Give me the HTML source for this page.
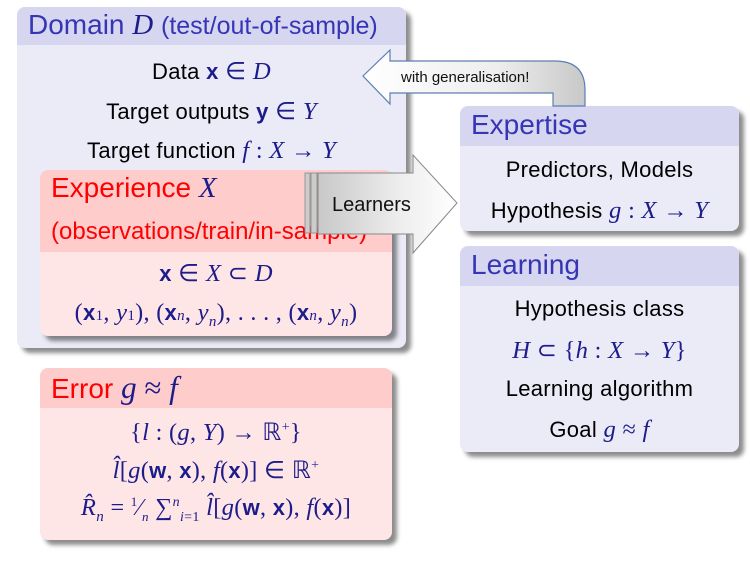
<!DOCTYPE html>
<html><head><meta charset="utf-8"><style>
body{margin:0;width:750px;height:564px;background:#fff;position:relative;overflow:hidden;font-family:"Liberation Sans","DejaVu Sans",sans-serif;}
.box{position:absolute;border-radius:8px;overflow:hidden;box-shadow:5px 5px 4px rgba(0,0,0,0.45);}
.hd{position:absolute;left:0;right:0;top:0;}
.l{position:absolute;left:0;right:0;text-align:center;font-size:22px;color:#000;white-space:nowrap;letter-spacing:0.3px;}
.m{color:#1c1c8a;font-family:"Liberation Serif",serif;font-style:italic;font-size:1.12em;}
.mr{color:#1c1c8a;font-family:"Liberation Serif",serif;font-size:1.1em;}
.b{color:#1c1c8a;font-weight:bold;font-family:"Liberation Sans",sans-serif;}
.t{position:absolute;left:11px;font-size:28px;color:#3535b5;white-space:nowrap;}
.tr{color:#ff0000;}
</style></head><body>

<div class="box" style="left:17px;top:7px;width:389px;height:341px;background:#ebebf7;">
 <div class="hd" style="height:38px;background:#d6d6f0;"></div>
 <div class="t" style="top:2px;">Domain <span class="m" style="font-size:29px">D</span> <span style="font-size:25px">(test/out-of-sample)</span></div>
 <div class="l" style="top:50px;">Data <span class="b">x</span> <span class="mr">∈</span> <span class="m">D</span></div>
 <div class="l" style="top:90px;">Target outputs <span class="b">y</span> <span class="mr">∈</span> <span class="m">Y</span></div>
 <div class="l" style="top:130px;">Target function <span class="m">f</span> <span class="mr">:</span> <span class="m">X</span> <span class="mr">→</span> <span class="m">Y</span></div>
</div>

<div class="box" style="left:40px;top:170px;width:352px;height:166px;background:#ffe6e6;">
 <div class="hd" style="height:82px;background:#ffcccc;"></div>
 <div class="t tr" style="top:2px;">Experience <span class="m" style="font-size:29px">X</span></div>
 <div class="t tr" style="top:48px;font-size:24px;">(observations/train/in-sample)</div>
 <div class="l" style="top:89px;"><span class="b">x</span> <span class="mr">∈</span> <span class="m">X</span> <span class="mr">⊂</span> <span class="m">D</span></div>
 <div class="l" style="top:129px;"><span class="mr">(</span><span class="b">x</span><span class="mr" style="font-size:15px">1</span><span class="mr">, </span><span class="m">y</span><span class="mr" style="font-size:15px">1</span><span class="mr">), (</span><span class="b">x</span><span class="m" style="font-size:15px">n</span><span class="mr">, </span><span class="m">y<sub style="font-size:15px">n</sub></span><span class="mr">), . . . , (</span><span class="b">x</span><span class="m" style="font-size:15px">n</span><span class="mr">, </span><span class="m">y<sub style="font-size:15px">n</sub></span><span class="mr">)</span></div>
</div>

<div class="box" style="left:40px;top:368px;width:352px;height:172px;background:#ffe6e6;">
 <div class="hd" style="height:40px;background:#ffcccc;"></div>
 <div class="t tr" style="top:2px;">Error <span class="m">g</span> <span class="mr">≈</span> <span class="m">f</span></div>
 <div class="l" style="top:50px;font-size:22px;"><span class="mr">{</span><span class="m">l</span> <span class="mr">: (</span><span class="m">g</span><span class="mr">, </span><span class="m">Y</span><span class="mr">) → ℝ<sup style="font-size:14px">+</sup>}</span></div>
 <div class="l" style="top:88px;font-size:22px;"><span class="m">l̂</span><span class="mr">[</span><span class="m">g</span><span class="mr">(</span><span class="b">w</span><span class="mr">, </span><span class="b">x</span><span class="mr">), </span><span class="m">f</span><span class="mr">(</span><span class="b">x</span><span class="mr">)] ∈ ℝ<sup style="font-size:14px">+</sup></span></div>
 <div class="l" style="top:126px;font-size:22px;"><span class="m">R̂<sub style="font-size:15px">n</sub></span> <span class="mr">= <sup style="font-size:13px">1</sup>⁄<sub style="font-size:13px"><i>n</i></sub> ∑<sup style="font-size:14px"><i>n</i></sup><sub style="font-size:14px"><i>i</i>=1</sub></span> <span class="m">l̂</span><span class="mr">[</span><span class="m">g</span><span class="mr">(</span><span class="b">w</span><span class="mr">, </span><span class="b">x</span><span class="mr">), </span><span class="m">f</span><span class="mr">(</span><span class="b">x</span><span class="mr">)]</span></div>
</div>

<div class="box" style="left:460px;top:106px;width:279px;height:125px;background:#ebebf7;">
 <div class="hd" style="height:40px;background:#d6d6f0;"></div>
 <div class="t" style="top:3px;">Expertise</div>
 <div class="l" style="top:51px;">Predictors, Models</div>
 <div class="l" style="top:91px;">Hypothesis <span class="m">g</span> <span class="mr">:</span> <span class="m">X</span> <span class="mr">→</span> <span class="m">Y</span></div>
</div>

<div class="box" style="left:460px;top:246px;width:279px;height:206px;background:#ebebf7;">
 <div class="hd" style="height:40px;background:#d6d6f0;"></div>
 <div class="t" style="top:3px;">Learning</div>
 <div class="l" style="top:50px;">Hypothesis class</div>
 <div class="l" style="top:90px;"><span class="m">H</span> <span class="mr">⊂ {</span><span class="m">h</span> <span class="mr">:</span> <span class="m">X</span> <span class="mr">→</span> <span class="m">Y</span><span class="mr">}</span></div>
 <div class="l" style="top:130px;">Learning algorithm</div>
 <div class="l" style="top:170px;">Goal <span class="m">g</span> <span class="mr">≈</span> <span class="m">f</span></div>
</div>

<svg style="position:absolute;left:0;top:0" width="750" height="564">
 <defs>
  <linearGradient id="g1" x1="0" y1="0" x2="1" y2="0"><stop offset="0" stop-color="#fff"/><stop offset="0.6" stop-color="#eee"/><stop offset="1" stop-color="#c8c8c8"/></linearGradient>
  <linearGradient id="g2" x1="0" y1="0" x2="1" y2="0"><stop offset="0" stop-color="#c8c8c8"/><stop offset="0.6" stop-color="#eee"/><stop offset="1" stop-color="#fff"/></linearGradient>
 </defs>
 <path d="M363,76 L390,50 L390,61 L555,61 Q585,61 585,90 L585,106 L553,106 L553,93 L390,93 L390,104 Z" fill="url(#g1)" stroke="#5a7fb5" stroke-width="1.2"/>
 <text x="401" y="82" font-family="Liberation Sans,sans-serif" font-size="15" fill="#111">with generalisation!</text>
 <rect x="305" y="173" width="5" height="60" fill="#ccc" stroke="#888" stroke-width="0.8"/>
 <rect x="311" y="173" width="6" height="60" fill="#ccc" stroke="#888" stroke-width="0.8"/>
 <path d="M318,173 L413,173 L413,155 L457,203 L413,253 L413,234 L318,234 Z" fill="url(#g2)" stroke="#888" stroke-width="1"/>
 <text x="332" y="211" font-family="Liberation Sans,sans-serif" font-size="20" fill="#111">Learners</text>
</svg>
</body></html>
